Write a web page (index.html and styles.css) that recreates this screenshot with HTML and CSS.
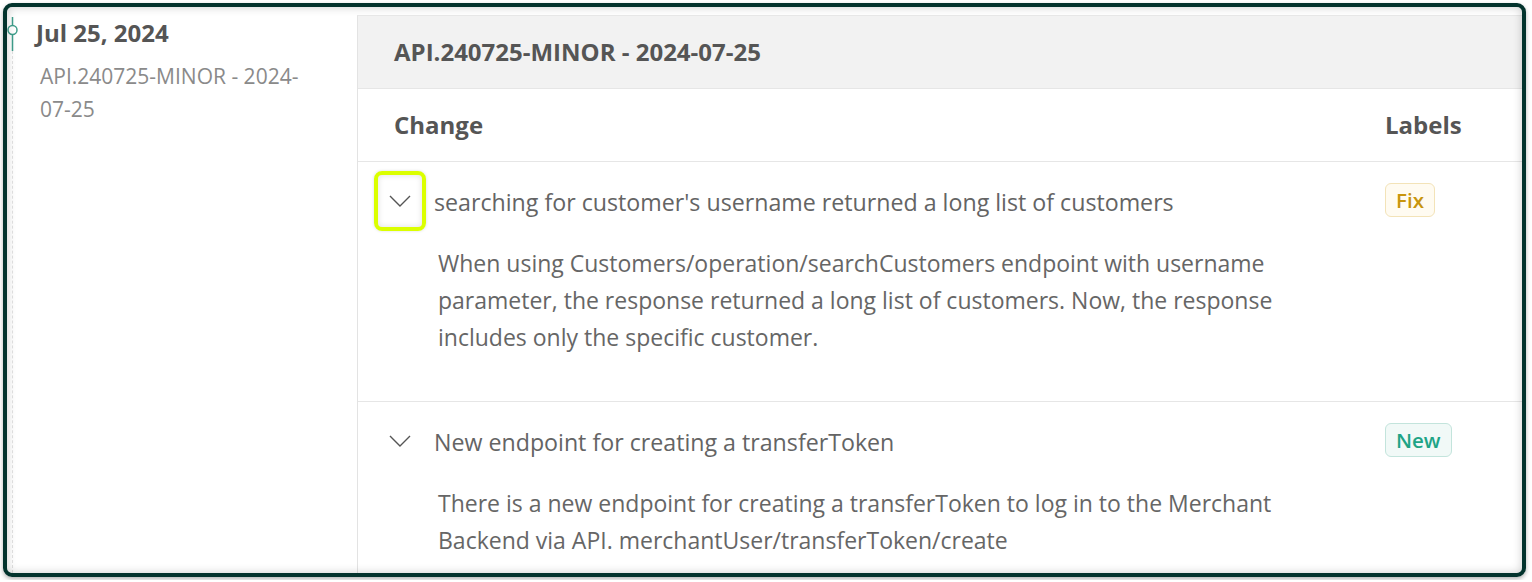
FILE: index.html
```html
<!DOCTYPE html>
<html lang="en">
<head>
    <meta charset="UTF-8">
    <meta name="viewport" content="width=device-width, initial-scale=1.0">
    <title>API Changelog</title>
    <link rel="stylesheet" href="styles.css">
</head>
<body>

    <div class="frame">

        <!-- Timeline -->
        <aside class="timeline">
            <svg class="marker" width="12" height="34" viewBox="0 0 12 34">
                <line x1="5.5" y1="0" x2="5.5" y2="34" stroke="#3f9e8b" stroke-width="1.5"/>
                <circle cx="5.5" cy="13" r="4.5" fill="#fff" stroke="#3f9e8b" stroke-width="1.5"/>
            </svg>
            <h3 class="date">Jul 25, 2024</h3>
            <p class="release-link">API.240725-MINOR - 2024-07-25</p>
        </aside>

        <!-- Release card -->
        <section class="release">
            <h2 class="release-title">API.240725-MINOR - 2024-07-25</h2>

            <div class="changes">
                <div class="col-head">Change</div>
                <div class="col-head">Labels</div>

                <div class="change">
                    <div class="change-head">
                        <button class="toggle focused">
                            <svg width="22" height="12" viewBox="0 0 22 12"><path d="M1 1 L11 11 L21 1" fill="none" stroke="#555" stroke-width="1.4"/></svg>
                        </button>
                        <span class="change-title">searching for customer's username returned a long list of customers</span>
                    </div>
                    <p class="change-desc">When using Customers/operation/searchCustomers endpoint with username parameter, the response returned a long list of customers. Now, the response includes only the specific customer.</p>
                </div>
                <div class="labels"><span class="badge fix">Fix</span></div>

                <div class="change">
                    <div class="change-head">
                        <button class="toggle">
                            <svg width="22" height="12" viewBox="0 0 22 12"><path d="M1 1 L11 11 L21 1" fill="none" stroke="#555" stroke-width="1.4"/></svg>
                        </button>
                        <span class="change-title">New endpoint for creating a transferToken</span>
                    </div>
                    <p class="change-desc">There is a new endpoint for creating a transferToken to log in to the Merchant Backend via API. merchantUser/transferToken/create</p>
                </div>
                <div class="labels"><span class="badge new">New</span></div>
            </div>
        </section>

    </div>

</body>
</html>
```
FILE: styles.css
```css
/* Global Styles */
* {
    margin: 0;
    padding: 0;
    box-sizing: border-box;
}

body {
    background: #fff;
    font-family: "Open Sans", sans-serif;
    color: #646464;
}

/* Frame */
.frame {
    position: relative;
    display: flex;
    width: 1523px;
    height: 574px;
    margin: 3px;
    border: 4px solid #03332d;
    border-radius: 9px;
    overflow: hidden;
    box-shadow: 0 2px 4px rgba(0, 0, 0, 0.3);
}

.frame::after {
    content: "";
    position: absolute;
    inset: 0;
    border-radius: 5px;
    box-shadow: inset 0 0 10px rgba(0, 0, 0, 0.2);
    pointer-events: none;
}

/* Timeline */
.timeline {
    position: relative;
    width: 350px;
    flex-shrink: 0;
    padding: 11px 0 0 29px;
}

.timeline::before {
    content: "";
    position: absolute;
    left: 5px;
    top: 44px;
    bottom: 0;
    border-left: 1px dashed #e2e2e2;
}

.marker {
    position: absolute;
    left: 0;
    top: 10px;
}

.date {
    font-size: 24px;
    font-weight: 700;
    line-height: 30px;
    color: #555;
}

.release-link {
    width: 272px;
    margin: 12px 0 0 4px;
    font-size: 21px;
    line-height: 33px;
    color: #8a8a8a;
}

/* Release card */
.release {
    flex: 1;
    margin-top: 8px;
    border-left: 1px solid #e3e3e3;
    border-top: 1px solid #e8e8e8;
}

.release-title {
    height: 73px;
    padding-left: 36px;
    background: #f2f2f2;
    border-bottom: 1px solid #e6e6e6;
    font-size: 24px;
    font-weight: 700;
    line-height: 71px;
    color: #555;
}

.changes {
    display: grid;
    grid-template-columns: 1fr 137px;
}

.col-head {
    height: 73px;
    border-bottom: 1px solid #e6e6e6;
    font-size: 24px;
    font-weight: 700;
    line-height: 72px;
    color: #555;
}

.col-head:first-child {
    padding-left: 36px;
}

.change {
    padding: 9px 0 45px 16px;
    border-bottom: 1px solid #e6e6e6;
}

.labels {
    padding-top: 21px;
    border-bottom: 1px solid #e6e6e6;
}

.change-head {
    display: flex;
    align-items: center;
    gap: 8px;
}

.toggle {
    display: flex;
    align-items: center;
    justify-content: center;
    width: 52px;
    height: 60px;
    border: 4px solid transparent;
    border-radius: 8px;
    background: none;
}

.toggle.focused {
    border-color: #dbff00;
    box-shadow: inset 0 0 6px rgba(0, 0, 0, 0.12), 0 0 3px rgba(0, 0, 0, 0.15);
}

.change-title {
    padding-top: 3px;
    font-size: 23.2px;
    line-height: 37px;
    color: #646464;
}

.change-desc {
    max-width: 900px;
    margin: 14px 0 0 64px;
    font-size: 23px;
    line-height: 37px;
    color: #666;
}

.badge {
    display: inline-block;
    height: 34px;
    padding: 0 10px;
    border: 1px solid;
    border-radius: 6px;
    font-size: 20.5px;
    font-weight: 600;
    line-height: 32px;
}

.badge.fix {
    color: #c8950d;
    background: #fffbf1;
    border-color: #f3e3b8;
}

.badge.new {
    color: #1ea486;
    background: #f1f9f7;
    border-color: #c3e4dc;
}
```
